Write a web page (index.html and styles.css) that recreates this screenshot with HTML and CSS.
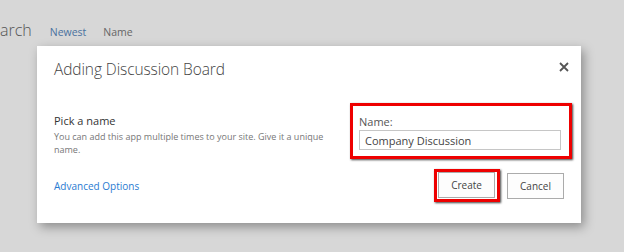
FILE: index.html
```html
<!DOCTYPE html>
<html lang="en">
<head>
    <meta charset="UTF-8">
    <meta name="viewport" content="width=device-width, initial-scale=1.0">
    <title>Adding Discussion Board</title>
    <link rel="stylesheet" href="styles.css">
</head>
<body>
    <div class="topbar">
        <span class="search">arch</span>
        <span class="sort active">Newest</span>
        <span class="sort">Name</span>
    </div>

    <div class="dialog">
        <div class="dialog-head">
            <h1>Adding Discussion Board</h1>
            <button class="close" title="Close">
                <svg width="10" height="10" viewBox="0 0 10 10">
                    <path d="M1 1 L9 9 M9 1 L1 9" stroke="#555" stroke-width="1.8" fill="none"/>
                </svg>
            </button>
        </div>

        <div class="dialog-body">
            <div class="pick">
                <h2>Pick a name</h2>
                <p>You can add this app multiple times to your site. Give it a unique name.</p>
            </div>
            <div class="highlight name-field">
                <label for="app-name">Name:</label>
                <input id="app-name" type="text" value="Company Discussion">
            </div>
        </div>

        <div class="dialog-foot">
            <a href="#" class="advanced">Advanced Options</a>
            <div class="buttons">
                <span class="highlight btn-frame"><button class="btn">Create</button></span>
                <button class="btn">Cancel</button>
            </div>
        </div>
    </div>
</body>
</html>
```

FILE: styles.css
```css
body {
    margin: 0;
    height: 252px;
    overflow: hidden;
    background-color: #d7d7d7;
    font-family: "Open Sans", "Noto Sans", sans-serif;
    color: #444;
}

.topbar {
    display: flex;
    align-items: baseline;
    height: 46px;
    padding-top: 19px;
    box-sizing: border-box;
}

.search {
    font-size: 16px;
    font-weight: 300;
    color: #555;
    margin-right: 18px;
}

.sort {
    font-size: 10.5px;
    color: #666;
    margin-right: 17px;
}

.sort.active {
    color: #4a72a0;
}

.dialog {
    margin-left: 37px;
    width: 544px;
    height: 177px;
    box-sizing: border-box;
    padding: 0 17px 0 17px;
    background-color: white;
    box-shadow: 3px 4px 10px rgba(0, 0, 0, 0.35);
}

.dialog-head {
    display: flex;
    justify-content: space-between;
    align-items: flex-start;
    padding-top: 12px;
}

h1 {
    margin: 0;
    font-size: 15.5px;
    font-weight: 300;
    letter-spacing: -0.1px;
    color: #444;
}

.close {
    border: none;
    background: none;
    padding: 0;
    margin: 2px -5px 0 0;
    cursor: pointer;
}

.dialog-body {
    display: flex;
    justify-content: space-between;
    margin-top: 23px;
    margin-right: -8px;
}

.pick {
    width: 278px;
    padding-top: 10px;
}

h2 {
    margin: 0;
    font-size: 11px;
    font-weight: normal;
    color: #333;
}

.pick p {
    margin: 2px 0 0;
    font-size: 9px;
    line-height: 13px;
    color: #777;
}

.highlight {
    border: 3px solid #ee0000;
    box-shadow: 1px 1px 2px rgba(0, 0, 0, 0.75);
}

.name-field {
    width: 222px;
    box-sizing: border-box;
    padding: 8px 8px 6px 6px;
    display: flex;
    flex-direction: column;
}

.name-field label {
    font-size: 11px;
    color: #555;
    margin-bottom: 1px;
}

.name-field input {
    height: 20px;
    box-sizing: border-box;
    border: 1px solid #c6c6c6;
    padding: 0 5px;
    font-family: inherit;
    font-size: 11px;
    color: #444;
}

.dialog-foot {
    display: flex;
    justify-content: space-between;
    align-items: center;
    margin-top: 10px;
}

.advanced {
    font-size: 10px;
    color: #2a7bd1;
    text-decoration: none;
}

.buttons {
    display: flex;
    align-items: center;
    gap: 7px;
}

.btn-frame {
    display: flex;
    padding: 0 2px 1px 1px;
}

.btn {
    width: 57px;
    height: 26px;
    border: 1px solid #ababab;
    background-color: #fdfdfd;
    font-family: inherit;
    font-size: 10px;
    color: #444;
    cursor: pointer;
}
```
